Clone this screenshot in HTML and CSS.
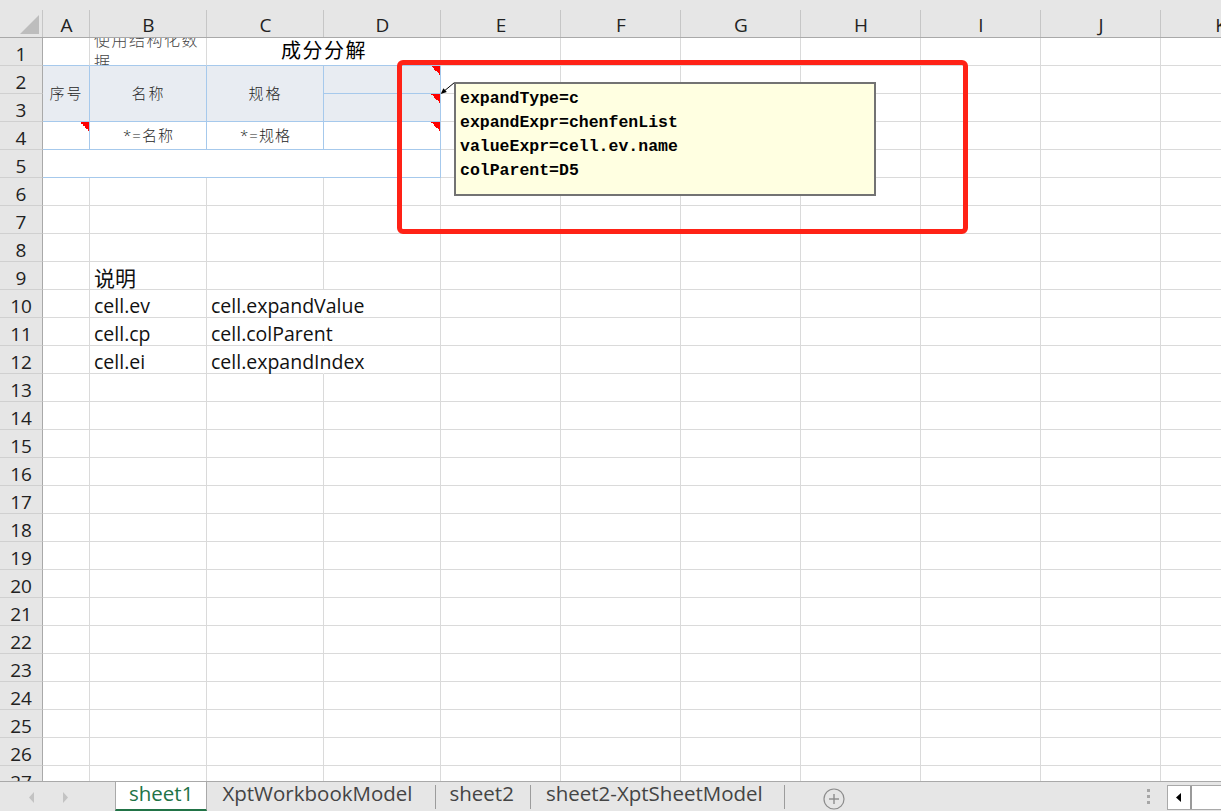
FILE: index.html
```html
<!DOCTYPE html>
<html lang="zh-CN">
<head>
<meta charset="utf-8">
<title>sheet1</title>
<link rel="stylesheet" href="styles.css">
</head>
<body>
<div class="app">
  <div class="sheet">
    <div class="grid">
      <div class="corner"><svg width="43" height="37" viewBox="0 0 43 37"><polygon points="20,34 39,34 39,15" fill="#bdbdbd"/></svg></div>
      <div class="ch">A</div><div class="ch">B</div><div class="ch">C</div><div class="ch">D</div><div class="ch">E</div><div class="ch">F</div><div class="ch">G</div><div class="ch">H</div><div class="ch">I</div><div class="ch">J</div><div class="ch">K</div>

      <div class="rh">1</div>
      <div class="c bb"></div>
      <div class="c bb wrap">使用结构化数据</div>
      <div class="c bb cs2 title">成分分解</div>
      <div class="c"></div><div class="c"></div><div class="c"></div><div class="c"></div><div class="c"></div><div class="c"></div><div class="c"></div>

      <div class="rh">2</div>
      <div class="c hd rs2 lab">序号</div>
      <div class="c hd rs2 lab">名称</div>
      <div class="c hd rs2 lab">规格</div>
      <div class="c hd flag"></div>
      <div class="c"></div><div class="c"></div><div class="c"></div><div class="c"></div><div class="c"></div><div class="c"></div><div class="c"></div>

      <div class="rh">3</div>
      <div class="c hd flag"></div>
      <div class="c"></div><div class="c"></div><div class="c"></div><div class="c"></div><div class="c"></div><div class="c"></div><div class="c"></div>

      <div class="rh">4</div>
      <div class="c bl flag"></div>
      <div class="c bl ctr lab tight">*=名称</div>
      <div class="c bl ctr lab tight">*=规格</div>
      <div class="c bl flag"></div>
      <div class="c"></div><div class="c"></div><div class="c"></div><div class="c"></div><div class="c"></div><div class="c"></div><div class="c"></div>

      <div class="rh">5</div>
      <div class="c bl cs4"></div>
      <div class="c"></div><div class="c"></div><div class="c"></div><div class="c"></div><div class="c"></div><div class="c"></div><div class="c"></div>

      <div class="rh">6</div>
      <div class="c"></div><div class="c"></div><div class="c"></div><div class="c"></div><div class="c"></div><div class="c"></div><div class="c"></div><div class="c"></div><div class="c"></div><div class="c"></div><div class="c"></div>
      <div class="rh">7</div>
      <div class="c"></div><div class="c"></div><div class="c"></div><div class="c"></div><div class="c"></div><div class="c"></div><div class="c"></div><div class="c"></div><div class="c"></div><div class="c"></div><div class="c"></div>
      <div class="rh">8</div>
      <div class="c"></div><div class="c"></div><div class="c"></div><div class="c"></div><div class="c"></div><div class="c"></div><div class="c"></div><div class="c"></div><div class="c"></div><div class="c"></div><div class="c"></div>

      <div class="rh">9</div>
      <div class="c"></div><div class="c big">说明</div>
      <div class="c"></div><div class="c"></div><div class="c"></div><div class="c"></div><div class="c"></div><div class="c"></div><div class="c"></div><div class="c"></div><div class="c"></div>

      <div class="rh">10</div>
      <div class="c"></div><div class="c">cell.ev</div><div class="c ov">cell.expandValue</div>
      <div class="c"></div><div class="c"></div><div class="c"></div><div class="c"></div><div class="c"></div><div class="c"></div><div class="c"></div><div class="c"></div>

      <div class="rh">11</div>
      <div class="c"></div><div class="c">cell.cp</div><div class="c ov">cell.colParent</div>
      <div class="c"></div><div class="c"></div><div class="c"></div><div class="c"></div><div class="c"></div><div class="c"></div><div class="c"></div><div class="c"></div>

      <div class="rh">12</div>
      <div class="c"></div><div class="c">cell.ei</div><div class="c ov">cell.expandIndex</div>
      <div class="c"></div><div class="c"></div><div class="c"></div><div class="c"></div><div class="c"></div><div class="c"></div><div class="c"></div><div class="c"></div>

      <div class="rh">13</div>
      <div class="c"></div><div class="c"></div><div class="c"></div><div class="c"></div><div class="c"></div><div class="c"></div><div class="c"></div><div class="c"></div><div class="c"></div><div class="c"></div><div class="c"></div>
      <div class="rh">14</div>
      <div class="c"></div><div class="c"></div><div class="c"></div><div class="c"></div><div class="c"></div><div class="c"></div><div class="c"></div><div class="c"></div><div class="c"></div><div class="c"></div><div class="c"></div>
      <div class="rh">15</div>
      <div class="c"></div><div class="c"></div><div class="c"></div><div class="c"></div><div class="c"></div><div class="c"></div><div class="c"></div><div class="c"></div><div class="c"></div><div class="c"></div><div class="c"></div>
      <div class="rh">16</div>
      <div class="c"></div><div class="c"></div><div class="c"></div><div class="c"></div><div class="c"></div><div class="c"></div><div class="c"></div><div class="c"></div><div class="c"></div><div class="c"></div><div class="c"></div>
      <div class="rh">17</div>
      <div class="c"></div><div class="c"></div><div class="c"></div><div class="c"></div><div class="c"></div><div class="c"></div><div class="c"></div><div class="c"></div><div class="c"></div><div class="c"></div><div class="c"></div>
      <div class="rh">18</div>
      <div class="c"></div><div class="c"></div><div class="c"></div><div class="c"></div><div class="c"></div><div class="c"></div><div class="c"></div><div class="c"></div><div class="c"></div><div class="c"></div><div class="c"></div>
      <div class="rh">19</div>
      <div class="c"></div><div class="c"></div><div class="c"></div><div class="c"></div><div class="c"></div><div class="c"></div><div class="c"></div><div class="c"></div><div class="c"></div><div class="c"></div><div class="c"></div>
      <div class="rh">20</div>
      <div class="c"></div><div class="c"></div><div class="c"></div><div class="c"></div><div class="c"></div><div class="c"></div><div class="c"></div><div class="c"></div><div class="c"></div><div class="c"></div><div class="c"></div>
      <div class="rh">21</div>
      <div class="c"></div><div class="c"></div><div class="c"></div><div class="c"></div><div class="c"></div><div class="c"></div><div class="c"></div><div class="c"></div><div class="c"></div><div class="c"></div><div class="c"></div>
      <div class="rh">22</div>
      <div class="c"></div><div class="c"></div><div class="c"></div><div class="c"></div><div class="c"></div><div class="c"></div><div class="c"></div><div class="c"></div><div class="c"></div><div class="c"></div><div class="c"></div>
      <div class="rh">23</div>
      <div class="c"></div><div class="c"></div><div class="c"></div><div class="c"></div><div class="c"></div><div class="c"></div><div class="c"></div><div class="c"></div><div class="c"></div><div class="c"></div><div class="c"></div>
      <div class="rh">24</div>
      <div class="c"></div><div class="c"></div><div class="c"></div><div class="c"></div><div class="c"></div><div class="c"></div><div class="c"></div><div class="c"></div><div class="c"></div><div class="c"></div><div class="c"></div>
      <div class="rh">25</div>
      <div class="c"></div><div class="c"></div><div class="c"></div><div class="c"></div><div class="c"></div><div class="c"></div><div class="c"></div><div class="c"></div><div class="c"></div><div class="c"></div><div class="c"></div>
      <div class="rh">26</div>
      <div class="c"></div><div class="c"></div><div class="c"></div><div class="c"></div><div class="c"></div><div class="c"></div><div class="c"></div><div class="c"></div><div class="c"></div><div class="c"></div><div class="c"></div>
      <div class="rh">27</div>
      <div class="c"></div><div class="c"></div><div class="c"></div><div class="c"></div><div class="c"></div><div class="c"></div><div class="c"></div><div class="c"></div><div class="c"></div><div class="c"></div><div class="c"></div>
    </div>

    <div class="red-frame"></div>
    <svg class="leader" width="24" height="24" viewBox="0 0 24 24">
      <line x1="18.5" y1="4.5" x2="7" y2="14" stroke="#000" stroke-width="1"/>
      <polygon points="4.7,16 10.8,13.9 7.4,10.2" fill="#000"/>
    </svg>
    <div class="comment">
      <div>expandType=c</div>
      <div>expandExpr=chenfenList</div>
      <div>valueExpr=cell.ev.name</div>
      <div>colParent=D5</div>
    </div>
  </div>

  <div class="tabbar">
    <div class="nav">
      <svg width="115" height="29" viewBox="0 0 115 29">
        <polygon points="34,10 34,21 29,15.5" fill="#c3c3c3"/>
        <polygon points="63,10 63,21 68,15.5" fill="#c3c3c3"/>
      </svg>
    </div>
    <div class="tab active">sheet1</div>
    <div class="tab t-wb">XptWorkbookModel</div>
    <div class="tab t-s2">sheet2</div>
    <div class="tab t-sm">sheet2-XptSheetModel</div>
    <div class="add">
      <svg width="22" height="22" viewBox="0 0 22 22">
        <circle cx="11" cy="11" r="10" fill="none" stroke="#8c8c8c" stroke-width="1.2"/>
        <line x1="6" y1="11" x2="16" y2="11" stroke="#8c8c8c" stroke-width="1.4"/>
        <line x1="11" y1="6" x2="11" y2="16" stroke="#8c8c8c" stroke-width="1.4"/>
      </svg>
    </div>
    <div class="spacer"></div>
    <div class="grip">
      <svg width="4" height="16" viewBox="0 0 4 16">
        <rect x="0" y="0" width="3" height="3" fill="#a6a6a6"/>
        <rect x="0" y="6" width="3" height="3" fill="#a6a6a6"/>
        <rect x="0" y="12" width="3" height="3" fill="#a6a6a6"/>
      </svg>
    </div>
    <div class="hscroll">
      <div class="harrow">
        <svg width="22" height="23" viewBox="0 0 22 23">
          <polygon points="13,7 13,16 8,11.5" fill="#000"/>
        </svg>
      </div>
      <div class="hdiv"></div>
    </div>
  </div>
</div>
</body>
</html>
```

FILE: styles.css
```css
* { box-sizing: border-box; }

html, body {
  margin: 0;
  padding: 0;
}

body {
  width: 1221px;
  height: 811px;
  overflow: hidden;
  background: #fff;
  font-family: "Open Sans", "Noto Sans CJK SC", sans-serif;
  color: #111;
}

.app {
  display: flex;
  flex-direction: column;
  width: 1221px;
  height: 811px;
}

/* ---------- sheet ---------- */
.sheet {
  position: relative;
  flex: none;
  height: 781px;
  overflow: hidden;
}

.grid {
  display: grid;
  grid-template-columns: 43px 47px 117px 117px 117px repeat(7, 120px);
  grid-template-rows: 38px;
  grid-auto-rows: 28px;
  width: max-content;
}

.corner {
  background: linear-gradient(#c6c6c6, #c6c6c6) right bottom / 1px 27px no-repeat, #e6e6e6;
  border-bottom: 1px solid #a9a9a9;
}
.corner svg { display: block; }

.ch {
  display: flex;
  align-items: flex-end;
  justify-content: center;
  padding-bottom: 2px;
  background: linear-gradient(#c6c6c6, #c6c6c6) right bottom / 1px 27px no-repeat, #e6e6e6;
  border-bottom: 1px solid #a9a9a9;
  font-size: 19px;
  line-height: 20px;
  color: #222;
}

.rh {
  display: flex;
  align-items: flex-end;
  justify-content: center;
  padding-bottom: 1.5px;
  background: #e6e6e6;
  border-right: 1px solid #a9a9a9;
  border-bottom: 1px solid #d0d0d0;
  font-size: 19px;
  line-height: 20px;
  color: #222;
}

.c {
  display: flex;
  align-items: flex-end;
  min-width: 0;
  padding: 0 3px 1px 4px;
  border-right: 1px solid #dadada;
  border-bottom: 1px solid #dadada;
  white-space: nowrap;
  font-size: 19.5px;
  line-height: 20px;
  color: #111;
}

.bb { border-bottom-color: #a6c9ec; }

.bl {
  border-right-color: #a6c9ec;
  border-bottom-color: #a6c9ec;
}

.hd {
  align-items: center;
  justify-content: center;
  background-color: #e8ecf2;
  border-right-color: #a6c9ec;
  border-bottom-color: #a6c9ec;
}

.rs2 { grid-row: span 2; }
.cs2 { grid-column: span 2; }
.cs4 { grid-column: span 4; }

.flag {
  background-image: linear-gradient(to bottom left, #ff0000 50%, transparent 50%);
  background-size: 9px 9px;
  background-position: right top;
  background-repeat: no-repeat;
}

.lab {
  font-size: 15px;
  letter-spacing: 2px;
  font-weight: 300;
  color: #262626;
}

.lab.tight { letter-spacing: 1px; }

.ctr {
  align-items: center;
  justify-content: center;
}

.wrap {
  align-items: center;
  overflow: hidden;
  white-space: normal;
  font-size: 16px;
  letter-spacing: 1.5px;
  line-height: 22px;
  font-weight: 300;
  color: #444;
}

.title {
  align-items: center;
  justify-content: center;
  font-size: 20px;
  letter-spacing: 1.5px;
  color: #000;
}

.big { font-size: 21px; }

.ov { border-right-color: transparent; }

/* ---------- overlays ---------- */
.red-frame {
  position: absolute;
  left: 397px;
  top: 60px;
  width: 571px;
  height: 174px;
  border: 5px solid #ff2216;
  border-radius: 6px;
}

.leader {
  position: absolute;
  left: 436px;
  top: 78px;
}

.comment {
  position: absolute;
  left: 454px;
  top: 82px;
  width: 422px;
  height: 114px;
  padding: 3px 0 0 4px;
  border: 2px solid #737373;
  background: #ffffe1;
  font-family: "Liberation Mono", monospace;
  font-weight: bold;
  font-size: 16.5px;
  line-height: 24px;
  color: #000;
}

/* ---------- tab bar ---------- */
.tabbar {
  flex: none;
  display: flex;
  height: 30px;
  border-top: 1px solid #a9a9a9;
  background: #e6e6e6;
  overflow: hidden;
}

.nav { flex: none; width: 115px; }
.nav svg { display: block; }

.tab {
  flex: none;
  display: flex;
  align-items: center;
  height: 29px;
  padding: 0 18px 5px 15px;
  border-bottom: 2px solid transparent;
  background: linear-gradient(#9c9c9c, #9c9c9c) right 3px / 1px 24px no-repeat;
  font-size: 20.5px;
  line-height: 22px;
  color: #444;
  white-space: nowrap;
}

.tab.t-wb { padding-right: 24px; }
.tab.t-s2 { padding-left: 13px; padding-right: 17px; }
.tab.t-sm { padding-right: 22px; }

.tab.active {
  padding: 0 13px 5px;
  background: #fff;
  color: #217346;
  border-left: 1px solid #a9a9a9;
  border-right: 1px solid #a9a9a9;
  border-bottom-color: #217346;
}

.add {
  flex: none;
  padding: 6px 0 0 38px;
}
.add svg { display: block; }

.spacer { flex: 1; }

.grip {
  flex: none;
  margin: 7px 16px 0 0;
}
.grip svg { display: block; }

.hscroll {
  flex: none;
  display: flex;
  width: 70px;
  height: 25px;
  margin: 3px -16px 0 0;
  border: 1px solid #a9a9a9;
  background: #fff;
}

.harrow { flex: none; width: 22px; }
.harrow svg { display: block; }

.hdiv {
  flex: none;
  width: 2px;
  background: #9a9a9a;
}
```
